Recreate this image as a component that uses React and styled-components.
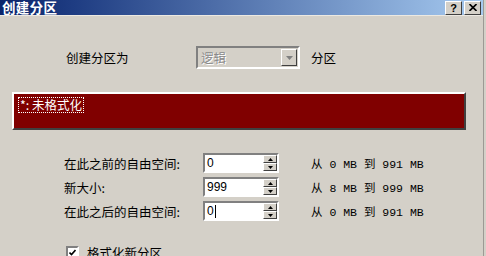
import styled, { createGlobalStyle } from "styled-components";

const GlobalStyle = createGlobalStyle`
  html, body {
    margin: 0;
    padding: 0;
    background: #d4d0c8;
    overflow: hidden;
  }
  body {
    font-family: "Noto Sans CJK SC", "Liberation Sans", sans-serif;
    font-size: 12px;
    color: #000;
  }
`;

const Window = styled.div`
  width: 483px;
  height: 256px;
  background: #d4d0c8;
  border-right: 1px solid #9c9a94;
  display: flex;
  flex-direction: column;
  overflow: hidden;
`;

const TitleBar = styled.div`
  height: 15px;
  background: linear-gradient(to right, #0a246a 0%, #1e3c82 15%, #a6caf0 100%);
  display: flex;
  align-items: center;
  padding: 0 2px 0 2px;
  border-bottom: 1px solid #ece9e2;
`;

const Title = styled.div`
  flex: 1;
  color: #fff;
  font-weight: bold;
  font-size: 13.5px;
  line-height: 15px;
  letter-spacing: 0.3px;
`;

const TitleButton = styled.div`
  width: 15px;
  height: 12px;
  margin-left: 2px;
  background: #d4d0c8;
  border-top: 1px solid #fff;
  border-left: 1px solid #fff;
  border-right: 1px solid #404040;
  border-bottom: 1px solid #404040;
  display: flex;
  align-items: center;
  justify-content: center;
  font-family: "Liberation Sans", sans-serif;
  font-weight: bold;
  font-size: 11px;
  line-height: 12px;
`;

const Body = styled.div`
  display: flex;
  flex-direction: column;
  padding: 30px 0 0 0;
`;

const Row = styled.div`
  display: flex;
  align-items: center;
  height: ${(p) => p.$h || 20}px;
  margin-top: ${(p) => p.$mt || 0}px;
  padding-left: ${(p) => p.$pl || 0}px;
`;

const Label = styled.div`
  width: ${(p) => p.$w}px;
  flex-shrink: 0;
  font-size: 12.5px;
  white-space: nowrap;
`;

const Combo = styled.div`
  width: 100px;
  height: 19px;
  border-top: 2px solid #808080;
  border-left: 2px solid #808080;
  border-right: 2px solid #fff;
  border-bottom: 2px solid #fff;
  display: flex;
  align-items: center;
  background: #d4d0c8;
`;

const ComboText = styled.div`
  flex: 1;
  padding-left: 3px;
  color: #8a8a8a;
  text-shadow: 1px 1px 0 #fff;
  font-size: 12.5px;
`;

const ComboButton = styled.div`
  width: 14px;
  height: 15px;
  margin-right: 1px;
  background: #d4d0c8;
  border-top: 1px solid #fff;
  border-left: 1px solid #fff;
  border-right: 1px solid #404040;
  border-bottom: 1px solid #404040;
  display: flex;
  align-items: center;
  justify-content: center;
`;

const Suffix = styled.div`
  margin-left: 11px;
  font-size: 12.5px;
`;

const PartitionBar = styled.div`
  box-sizing: border-box;
  margin: 23px 0 0 12px;
  width: 454px;
  height: 38px;
  border-top: 2px solid #fff;
  border-left: 2px solid #fff;
  border-right: 2px solid #404040;
  border-bottom: 2px solid #404040;
  background: #800000;
  padding: 2px 4px;
`;

const PartitionLabel = styled.span`
  display: inline-block;
  color: #fff;
  border: 1px dotted #fff;
  padding: 0 1px;
  font-size: 12.5px;
  line-height: 14px;
`;

const Spin = styled.div`
  width: 72px;
  height: 16px;
  border-top: 2px solid #808080;
  border-left: 2px solid #808080;
  border-right: 2px solid #fff;
  border-bottom: 2px solid #fff;
  background: #fff;
  display: flex;
  align-items: center;
`;

const SpinText = styled.div`
  flex: 1;
  padding-left: 2px;
  font-family: "Liberation Sans", sans-serif;
  font-size: 12px;
  display: flex;
  align-items: center;
`;

const Caret = styled.span`
  display: inline-block;
  width: 1px;
  height: 13px;
  background: #000;
  margin-left: 1px;
`;

const SpinButtons = styled.div`
  width: 14px;
  height: 16px;
  display: flex;
  flex-direction: column;
`;

const SpinButton = styled.div`
  flex: 1;
  background: #d4d0c8;
  border-top: 1px solid #fff;
  border-left: 1px solid #fff;
  border-right: 1px solid #404040;
  border-bottom: 1px solid #404040;
  display: flex;
  align-items: center;
  justify-content: center;
`;

const Range = styled.div`
  margin-left: 32px;
  font-family: "Liberation Mono", "Noto Sans CJK SC", monospace;
  font-size: 11.5px;
  white-space: pre;
`;

const CheckBox = styled.div`
  width: 9px;
  height: 9px;
  border-top: 2px solid #808080;
  border-left: 2px solid #808080;
  border-right: 2px solid #fff;
  border-bottom: 2px solid #fff;
  background: #fff;
  display: flex;
  align-items: center;
  justify-content: center;
  margin-right: 8px;
`;

const CheckLabel = styled.div`
  font-size: 12.5px;
`;

const Tri = ({ up, color = "#000" }) => (
  <svg width="5" height="3" viewBox="0 0 5 3">
    <path d={up ? "M2.5 0 L5 3 L0 3 Z" : "M0 0 L5 0 L2.5 3 Z"} fill={color} />
  </svg>
);

const SpinField = ({ value, caret }) => (
  <Spin>
    <SpinText>
      {value}
      {caret && <Caret />}
    </SpinText>
    <SpinButtons>
      <SpinButton>
        <Tri up />
      </SpinButton>
      <SpinButton>
        <Tri />
      </SpinButton>
    </SpinButtons>
  </Spin>
);

const sizes = [
  { label: "在此之前的自由空间:", value: "0", range: "从 0 MB 到 991 MB" },
  { label: "新大小:", value: "999", range: "从 8 MB 到 999 MB" },
  { label: "在此之后的自由空间:", value: "0", range: "从 0 MB 到 991 MB", caret: true },
];

export default function App() {
  return (
    <>
      <GlobalStyle />
      <Window>
        <TitleBar>
          <Title>创建分区</Title>
          <TitleButton>?</TitleButton>
          <TitleButton>
            <svg width="8" height="7" viewBox="0 0 8 7">
              <path d="M0.5 0 L7.5 7 M7.5 0 L0.5 7" stroke="#000" strokeWidth="1.6" />
            </svg>
          </TitleButton>
        </TitleBar>
        <Body>
          <Row $h={23} $pl={66}>
            <Label $w={130}>创建分区为</Label>
            <Combo>
              <ComboText>逻辑</ComboText>
              <ComboButton>
                <svg width="7" height="4" viewBox="0 0 7 4">
                  <path d="M0 0 L7 0 L3.5 4 Z" fill="#808080" />
                </svg>
              </ComboButton>
            </Combo>
            <Suffix>分区</Suffix>
          </Row>
          <PartitionBar>
            <PartitionLabel>*: 未格式化</PartitionLabel>
          </PartitionBar>
          {sizes.map((s, i) => (
            <Row key={i} $mt={i === 0 ? 23 : 4} $pl={64}>
              <Label $w={139}>{s.label}</Label>
              <SpinField value={s.value} caret={s.caret} />
              <Range>{s.range}</Range>
            </Row>
          ))}
          <Row $h={14} $mt={24} $pl={66}>
            <CheckBox>
              <svg width="7" height="7" viewBox="0 0 7 7">
                <path d="M0.5 3.5 L2.5 5.5 L6.5 1" stroke="#000" strokeWidth="1.6" fill="none" />
              </svg>
            </CheckBox>
            <CheckLabel>格式化新分区</CheckLabel>
          </Row>
        </Body>
      </Window>
    </>
  );
}
